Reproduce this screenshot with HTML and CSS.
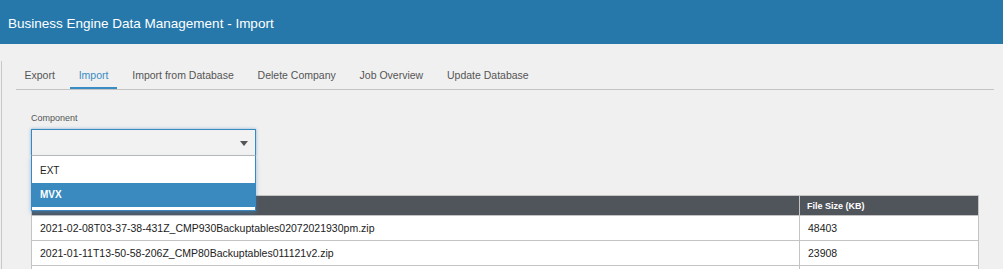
FILE: index.html
```html
<!DOCTYPE html>
<html lang="en">

<head>
    <meta charset="utf-8">
    <meta name="viewport" content="width=device-width, initial-scale=1.0">
    <title>Business Engine Data Management - Import</title>
    <link rel="stylesheet" href="styles.css">
</head>

<body>
    <header class="topbar">
        <h1>Business Engine Data Management - Import</h1>
    </header>

    <main class="side">
        <nav class="tabs">
            <a class="tab" href="#">Export</a>
            <a class="tab valgt" href="#">Import</a>
            <a class="tab" href="#">Import from Database</a>
            <a class="tab" href="#">Delete Company</a>
            <a class="tab" href="#">Job Overview</a>
            <a class="tab" href="#">Update Database</a>
        </nav>

        <section class="panel">
            <label class="felt-label">Component</label>
            <div class="combo">
                <div class="combo-boks">
                    <span class="pil"></span>
                </div>
                <ul class="combo-liste">
                    <li>EXT</li>
                    <li class="markeret">MVX</li>
                </ul>
            </div>

            <table class="filer">
                <thead>
                    <tr>
                        <th class="navn">File Name</th>
                        <th>File Size (KB)</th>
                    </tr>
                </thead>
                <tbody>
                    <tr>
                        <td>2021-02-08T03-37-38-431Z_CMP930Backuptables02072021930pm.zip</td>
                        <td>48403</td>
                    </tr>
                    <tr>
                        <td>2021-01-11T13-50-58-206Z_CMP80Backuptables011121v2.zip</td>
                        <td>23908</td>
                    </tr>
                    <tr>
                        <td></td>
                        <td></td>
                    </tr>
                </tbody>
            </table>
        </section>
    </main>
</body>

</html>
```

FILE: styles.css
```css
html {
    font-family: 'Liberation Sans', Arial, sans-serif;
}

body {
    margin: 0;
    background-color: #f0f0f0;
    color: #222;
}

.topbar {
    height: 44px;
    box-sizing: border-box;
    padding: 16px 8px 0;
    background-color: #2678ab;
}

.topbar h1 {
    margin: 0;
    font-size: 13.5px;
    line-height: 16px;
    font-weight: normal;
    color: #fff;
}

.side {
    margin-left: 1px;
    border-left: 1px solid #c8c8c8;
    height: 225px;
}

.tabs {
    display: flex;
    margin: 17px 9px 0 14px;
    border-bottom: 1px solid #c4c4c4;
}

.tab {
    padding: 8px 8.5px 5px;
    margin-right: 6.8px;
    font-size: 10.5px;
    line-height: 13px;
    color: #555;
    text-decoration: none;
    border-bottom: 2px solid transparent;
}

.tab.valgt {
    color: #3a8cc4;
    border-bottom-color: #3a8cc4;
}

.panel {
    padding: 23px 0 0 29px;
}

.felt-label {
    display: block;
    font-size: 9px;
    line-height: 11px;
    color: #555;
}

.combo {
    position: relative;
    width: 225px;
    margin-top: 5px;
}

.combo-boks {
    height: 25px;
    border: 1px solid #3a88c0;
    border-bottom-color: #bbb;
    background-color: #f2f2f2;
    box-shadow: 0 0 3px rgba(58, 136, 192, 0.6);
    display: flex;
    align-items: center;
    justify-content: flex-end;
    padding-right: 7px;
}

.pil {
    width: 0;
    height: 0;
    border-left: 4px solid transparent;
    border-right: 4px solid transparent;
    border-top: 5px solid #555;
    margin-top: 1px;
}

.combo-liste {
    position: absolute;
    top: 100%;
    left: 0;
    right: 0;
    z-index: 2;
    margin: 0;
    padding: 3px 0;
    list-style: none;
    background-color: #fff;
    border: 1px solid #3a88c0;
    border-top: none;
    box-shadow: 0 2px 4px rgba(58, 136, 192, 0.5);
}

.combo-liste li {
    height: 24px;
    line-height: 24px;
    padding-left: 8px;
    font-size: 10px;
    color: #222;
}

.combo-liste li.markeret {
    background-color: #3a8ac0;
    color: #fff;
    font-weight: bold;
}

.filer {
    margin-top: 39px;
    width: 948px;
    border-collapse: collapse;
    background-color: #fff;
    border: 1px solid #c4c4c4;
}

.filer th {
    background-color: #50545b;
    color: #fff;
    font-size: 9px;
    font-weight: bold;
    text-align: left;
    height: 19px;
    padding: 1px 7px 0;
    line-height: 18px;
    border-left: 1px solid #c4c4c4;
    box-sizing: border-box;
}

.filer th.navn {
    width: 768px;
}

.filer td {
    height: 24px;
    padding: 0 8px;
    font-size: 10.5px;
    line-height: 23px;
    border: 1px solid #c4c4c4;
}
```
